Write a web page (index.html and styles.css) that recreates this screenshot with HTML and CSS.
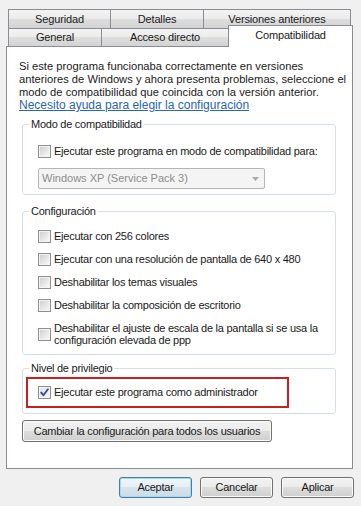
FILE: index.html
```html
<!DOCTYPE html>
<html lang="es">
<head>
<meta charset="utf-8">
<title>Propiedades - Compatibilidad</title>
<link rel="stylesheet" href="styles.css">
</head>
<body>
<div class="dialog">
  <div class="tabs">
    <div class="tab-row tab-row-back">
      <div class="tab tab-seg">Seguridad</div>
      <div class="tab tab-det">Detalles</div>
      <div class="tab tab-ver">Versiones anteriores</div>
    </div>
    <div class="tab-row tab-row-front">
      <div class="tab tab-gen">General</div>
      <div class="tab tab-acc">Acceso directo</div>
      <div class="tab tab-com tab-active">Compatibilidad</div>
    </div>
  </div>

  <div class="panel">
    <p class="intro">Si este programa funcionaba correctamente en versiones<br>anteriores de Windows y ahora presenta problemas, seleccione el<br>modo de compatibilidad que coincida con la versión anterior.</p>
    <a class="help-link" href="#">Necesito ayuda para elegir la configuración</a>

    <fieldset class="group group-mode">
      <legend>Modo de compatibilidad</legend>
      <div class="group-body">
        <label class="check-row"><span class="check"></span><span>Ejecutar este programa en modo de compatibilidad para:</span></label>
        <div class="select">
          <span class="select-text">Windows XP (Service Pack 3)</span>
          <svg class="select-arrow" width="7" height="4" viewBox="0 0 7 4"><polygon points="0,0 7,0 3.5,4" fill="#a9a9a9"/></svg>
        </div>
      </div>
    </fieldset>

    <fieldset class="group group-config">
      <legend>Configuración</legend>
      <div class="group-body config-list">
        <label class="check-row"><span class="check"></span><span>Ejecutar con 256 colores</span></label>
        <label class="check-row"><span class="check"></span><span>Ejecutar con una resolución de pantalla de 640 x 480</span></label>
        <label class="check-row"><span class="check"></span><span>Deshabilitar los temas visuales</span></label>
        <label class="check-row"><span class="check"></span><span>Deshabilitar la composición de escritorio</span></label>
        <label class="check-row check-row-multi"><span class="check"></span><span class="multi-text">Deshabilitar el ajuste de escala de la pantalla si se usa la<br>configuración elevada de ppp</span></label>
      </div>
    </fieldset>

    <fieldset class="group group-priv">
      <legend>Nivel de privilegio</legend>
      <div class="group-body priv-body">
        <div class="highlight">
          <label class="check-row"><span class="check check-on"><svg width="11" height="11" viewBox="0 0 11 11"><path d="M2.2 5.6 L4.4 8.2 L8.9 2.2" fill="none" stroke="#3b4f8c" stroke-width="1.9" stroke-linecap="round" stroke-linejoin="round"/></svg></span><span>Ejecutar este programa como administrador</span></label>
        </div>
      </div>
    </fieldset>

    <button class="btn btn-all" type="button">Cambiar la configuración para todos los usuarios</button>
  </div>

  <div class="actions">
    <button class="btn btn-default" type="button">Aceptar</button>
    <button class="btn" type="button">Cancelar</button>
    <button class="btn" type="button">Aplicar</button>
  </div>
</div>
</body>
</html>
```
FILE: styles.css
```css
* {
  box-sizing: border-box;
}

html, body {
  margin: 0;
  padding: 0;
}

body {
  width: 361px;
  height: 506px;
  overflow: hidden;
  background: #f0f0f0;
  font-family: "Liberation Sans", Arial, sans-serif;
  font-size: 11px;
  line-height: 13px;
  letter-spacing: -0.25px;
  color: #1a1a1a;
}

.dialog {
  padding: 9px 7px 0 6px;
}

/* ---------- tabs ---------- */
.tabs {
  padding-left: 2px;
}

.tab-row {
  display: flex;
}

.tab-row-back {
  height: 19px;
}

.tab-row-front {
  height: 18px;
}

.tab {
  display: flex;
  align-items: center;
  justify-content: center;
  border: 1px solid #898c95;
  border-bottom: none;
  background: linear-gradient(#f3f3f3, #ebebeb 50%, #dedede 50%, #d3d3d3);
  white-space: nowrap;
  font-size: 11px;
  letter-spacing: -0.15px;
}

.tab + .tab {
  margin-left: -1px;
}

.tab-seg { width: 103px; }
.tab-det { width: 94px; }
.tab-ver { width: 148px; }
.tab-gen { width: 94px; }
.tab-acc { width: 128px; }
.tab-com { width: 125px; }

.tab-active {
  position: relative;
  z-index: 1;
  margin-top: -3px;
  margin-bottom: -1px;
  background: #fff;
  padding-bottom: 3px;
}

/* ---------- panel ---------- */
.panel {
  width: 347px;
  background: #fff;
  border: 1px solid #898c95;
  padding: 13px 12px 26px 12px;
}

.intro {
  margin: 0;
  white-space: nowrap;
  font-size: 11.2px;
  letter-spacing: 0;
}

.help-link {
  display: inline-block;
  color: #2a64b4;
  text-decoration: underline;
  white-space: nowrap;
  font-size: 12px;
  letter-spacing: 0;
}

.group {
  margin: 0 4px 0 3px;
  padding: 0;
  min-width: 0;
  border: 1px solid #d5dfe5;
  border-radius: 3px;
}

.group legend {
  margin-left: 6px;
  padding: 0 2px;
  line-height: 13px;
}

.group-mode { margin-top: 6px; }
.group-config { margin-top: 10px; }
.group-priv { margin-top: 7px; }

.group-body {
  padding-left: 15px;
}

.group-mode .group-body {
  padding-top: 14px;
  padding-bottom: 5px;
}

.config-list {
  display: flex;
  flex-direction: column;
  gap: 10px;
  padding-top: 12px;
  padding-bottom: 8px;
}

.check-row {
  display: flex;
  align-items: center;
  gap: 3px;
  white-space: nowrap;
  min-height: 13px;
}

.multi-text {
  line-height: 12px;
}

.check {
  flex: none;
  width: 13px;
  height: 13px;
  border: 1px solid #8e8f8f;
  background: linear-gradient(135deg, #c9ccd1, #eeeeee 70%, #f7f7f7);
  box-shadow: inset 0 0 0 1px #f4f4f4;
  display: flex;
  align-items: center;
  justify-content: center;
}

.check-on {
  background: linear-gradient(135deg, #dde4ef, #f4f6fa);
}

.check-on svg {
  display: block;
}

.select {
  margin-top: 10px;
  width: 227px;
  height: 21px;
  border: 1px solid #b5b5b5;
  border-radius: 2px;
  background: #f4f4f4;
  display: flex;
  align-items: center;
  justify-content: space-between;
  padding: 0 5px 0 3px;
  color: #8d8d8d;
  letter-spacing: 0;
}

.select-arrow {
  display: block;
}

.priv-body {
  padding: 2px 0 5px 3px;
}

.highlight {
  width: 263px;
  height: 31px;
  border: 2px solid #cc1d25;
  padding-left: 10px;
  display: flex;
  align-items: center;
}

/* ---------- buttons ---------- */
.btn {
  font-family: inherit;
  font-size: 11px;
  line-height: 13px;
  letter-spacing: -0.25px;
  color: #1a1a1a;
  height: 21px;
  padding: 0;
  border: 1px solid #707070;
  border-radius: 3px;
  background: linear-gradient(#f2f2f2, #ebebeb 50%, #dddddd 50%, #cfcfcf);
  box-shadow: inset 0 0 0 1px #fbfbfb;
}

.btn-all {
  display: block;
  width: 250px;
  height: 22px;
  margin: 6px 0 0 3px;
}

.actions {
  display: flex;
  justify-content: flex-end;
  gap: 8px;
  margin-top: 8px;
}

.actions .btn {
  width: 73px;
}

.btn-default {
  border-color: #3c7fb1;
  background: linear-gradient(#f1f6f9, #e5eef4 50%, #d7e4ec 50%, #cbdbe6);
  box-shadow: inset 0 0 0 1px #a9d6f1;
}
```
